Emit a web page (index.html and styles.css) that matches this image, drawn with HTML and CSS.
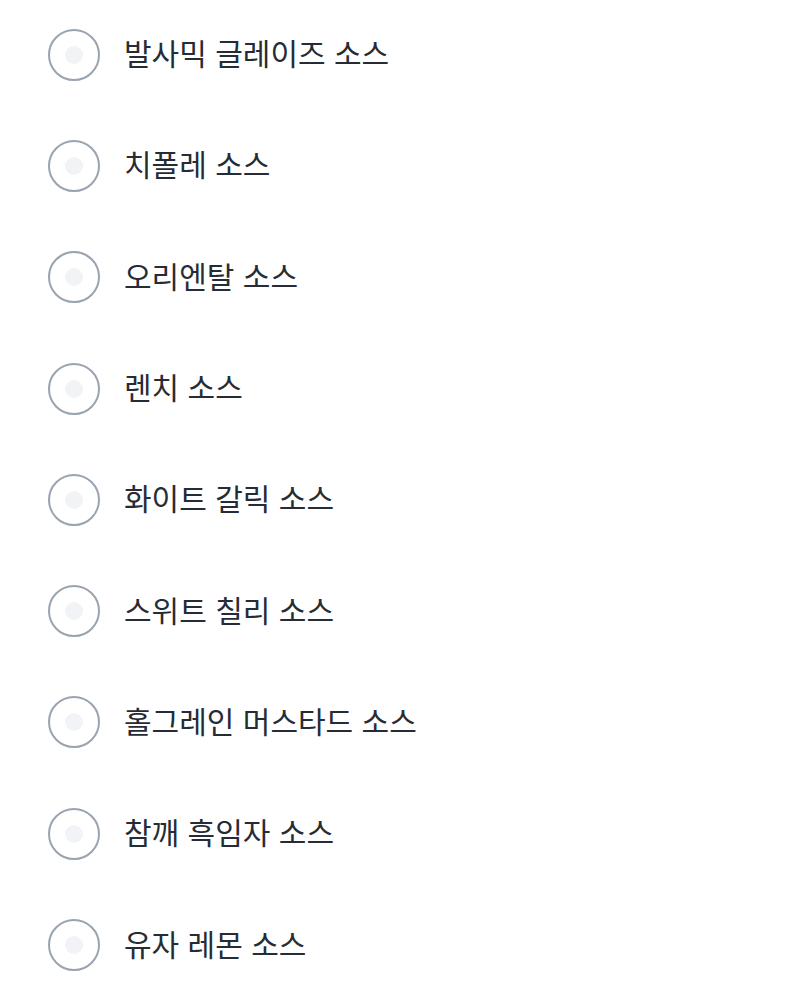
FILE: index.html
```html
<!DOCTYPE html>
<html lang="ko">
<head>
  <meta charset="UTF-8">
  <meta name="viewport" content="width=device-width, initial-scale=1.0">
  <title>소스 선택</title>
  <link rel="stylesheet" href="styles.css">
</head>
<body>
  <ul class="sauce-list">
    <li class="option"><span class="radio"></span><span class="label">발사믹 글레이즈 소스</span></li>
    <li class="option"><span class="radio"></span><span class="label">치폴레 소스</span></li>
    <li class="option"><span class="radio"></span><span class="label">오리엔탈 소스</span></li>
    <li class="option"><span class="radio"></span><span class="label">렌치 소스</span></li>
    <li class="option"><span class="radio"></span><span class="label">화이트 갈릭 소스</span></li>
    <li class="option"><span class="radio"></span><span class="label">스위트 칠리 소스</span></li>
    <li class="option"><span class="radio"></span><span class="label">홀그레인 머스타드 소스</span></li>
    <li class="option"><span class="radio"></span><span class="label">참깨 흑임자 소스</span></li>
    <li class="option"><span class="radio"></span><span class="label">유자 레몬 소스</span></li>
  </ul>
</body>
</html>
```

FILE: styles.css
```css
/* General Styles */
body {
  margin: 0;
  background: #ffffff;
  font-family: 'Noto Sans CJK KR', 'Noto Sans', sans-serif;
  color: #262c35;
}

.sauce-list {
  list-style: none;
  margin: -1px 0 0;
  padding: 0 0 0 48px;
}

.option {
  display: flex;
  align-items: center;
  gap: 24px;
  height: 111.3px;
  cursor: pointer;
}

.radio {
  box-sizing: border-box;
  width: 52px;
  height: 52px;
  flex-shrink: 0;
  border: 2px solid #9aa4b1;
  border-radius: 50%;
  display: flex;
  justify-content: center;
  align-items: center;
}

.radio::after {
  content: '';
  width: 18px;
  height: 18px;
  border-radius: 50%;
  background: #f1f3f6;
}

.label {
  font-size: 30px;
  line-height: 1;
  margin-bottom: 5px;
}
```
